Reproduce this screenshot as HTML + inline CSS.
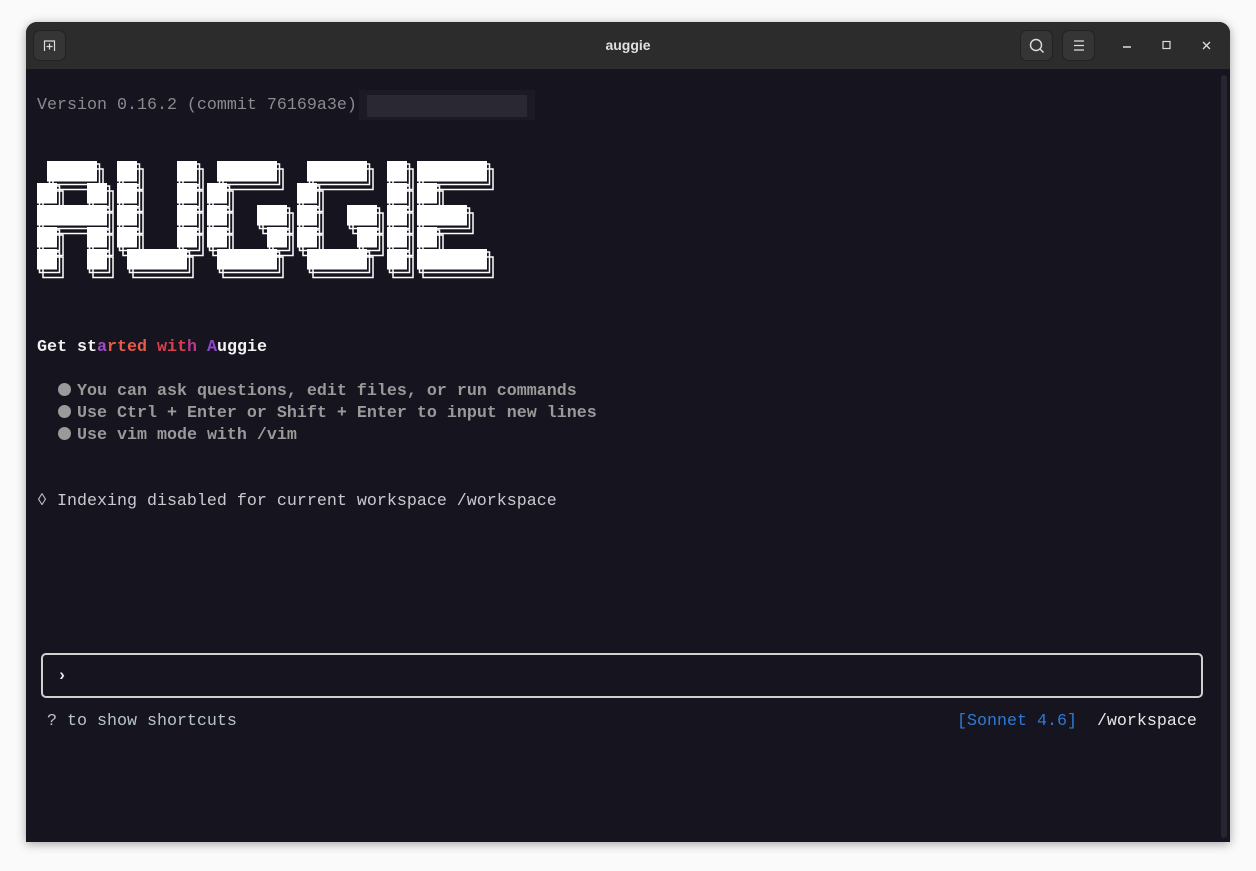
<!DOCTYPE html>
<html><head><meta charset="utf-8"><style>
body{margin:0;width:1256px;height:871px;background:#fafafa;position:relative;overflow:hidden;font-family:"Liberation Mono",monospace}
.win{position:absolute;left:26px;top:22px;width:1204px;height:820px;background:#16151f;border-radius:11px 11px 0 0;box-shadow:0 2px 10px rgba(0,0,0,.35);overflow:hidden}
.tb{position:absolute;left:0;top:0;width:1204px;height:47px;background:#2c2c2c}
.btn{position:absolute;top:8px;width:33px;height:31px;background:#353535;border:1px solid #222;border-radius:7px;box-sizing:border-box}
.title{position:absolute;left:0;width:1204px;top:15px;text-align:center;color:#e0e0e0;font:bold 14px "Liberation Sans",sans-serif}
.l{position:absolute;left:37px;height:22px;line-height:22px;font-size:16.67px;white-space:pre}
.dot{display:inline-block;width:13px;height:13px;border-radius:50%;background:#9a9a9a;vertical-align:-1px;margin-left:21px;margin-right:6px}
</style></head><body>
<div class="win">
<div class="tb">
<div class="btn" style="left:7px"><svg width="33" height="31" style="position:absolute;left:-1px;top:-1px"><path d="M11.5 21V11h10v10M16.5 13.5v6M13.5 16.5h6" stroke="#ddd" stroke-width="1.2" fill="none"/></svg></div>
<div class="title">auggie</div>
<div class="btn" style="left:994px"><svg width="33" height="31" style="position:absolute;left:-1px;top:-1px"><circle cx="16" cy="15" r="5.5" stroke="#ddd" stroke-width="1.4" fill="none"/><path d="M20 19l3.5 3.5" stroke="#ddd" stroke-width="1.4"/></svg></div>
<div class="btn" style="left:1036px"><svg width="33" height="31" style="position:absolute;left:-1px;top:-1px"><path d="M12 11h10M12 15.5h10M12 20h10" stroke="#ddd" stroke-width="1.2"/></svg></div>
<svg width="130" height="47" style="position:absolute;left:1080px;top:0"><path d="M17 25h8" stroke="#ddd" stroke-width="1.4"/><rect x="57" y="19.5" width="7" height="7" stroke="#ddd" stroke-width="1.2" fill="none"/><path d="M97 20l7 7M104 20l-7 7" stroke="#ddd" stroke-width="1.3"/></svg>
</div>
<div style="position:absolute;left:1195px;top:53px;width:6px;height:763px;background:#262530;border-radius:3px"></div>
</div>
<div style="position:absolute;left:359px;top:90px;width:176px;height:30px;background:#1c1b25"></div>
<div style="position:absolute;left:367px;top:95px;width:160px;height:22px;background:#2a2933"></div>
<div class="l" style="top:95px;color:#8a8a8f">Version 0.16.2 (commit 76169a3e)</div>
<svg width="520" height="140" style="position:absolute;left:0;top:150px" viewBox="0 150 520 140">
<defs><g id="b">
<rect x="47" y="161" width="50" height="20.5"/><rect x="117" y="161" width="20" height="20.5"/><rect x="177" y="161" width="20" height="20.5"/><rect x="217" y="161" width="60" height="20.5"/><rect x="307" y="161" width="60" height="20.5"/><rect x="387" y="161" width="20" height="20.5"/><rect x="417" y="161" width="70" height="20.5"/>
<rect x="37" y="183" width="20" height="20.5"/><rect x="87" y="183" width="20" height="20.5"/><rect x="117" y="183" width="20" height="20.5"/><rect x="177" y="183" width="20" height="20.5"/><rect x="207" y="183" width="20" height="20.5"/><rect x="297" y="183" width="20" height="20.5"/><rect x="387" y="183" width="20" height="20.5"/><rect x="417" y="183" width="20" height="20.5"/>
<rect x="37" y="205" width="70" height="20.5"/><rect x="117" y="205" width="20" height="20.5"/><rect x="177" y="205" width="20" height="20.5"/><rect x="207" y="205" width="20" height="20.5"/><rect x="257" y="205" width="30" height="20.5"/><rect x="297" y="205" width="20" height="20.5"/><rect x="347" y="205" width="30" height="20.5"/><rect x="387" y="205" width="20" height="20.5"/><rect x="417" y="205" width="50" height="20.5"/>
<rect x="37" y="227" width="20" height="20.5"/><rect x="87" y="227" width="20" height="20.5"/><rect x="117" y="227" width="20" height="20.5"/><rect x="177" y="227" width="20" height="20.5"/><rect x="207" y="227" width="20" height="20.5"/><rect x="267" y="227" width="20" height="20.5"/><rect x="297" y="227" width="20" height="20.5"/><rect x="357" y="227" width="20" height="20.5"/><rect x="387" y="227" width="20" height="20.5"/><rect x="417" y="227" width="20" height="20.5"/>
<rect x="37" y="249" width="20" height="20.5"/><rect x="87" y="249" width="20" height="20.5"/><rect x="127" y="249" width="60" height="20.5"/><rect x="217" y="249" width="60" height="20.5"/><rect x="307" y="249" width="60" height="20.5"/><rect x="387" y="249" width="20" height="20.5"/><rect x="417" y="249" width="70" height="20.5"/>
</g></defs>
<use href="#b" transform="translate(2.5,3)" fill="none" stroke="#fff" stroke-width="1.5"/>
<use href="#b" transform="translate(6,8)" fill="none" stroke="#fff" stroke-width="1.5"/>
<use href="#b" fill="#fff"/>
</svg>
<div class="l" style="top:337px;font-weight:bold;color:#f2f2f2">Get st<span style="color:#9b4ec4">a</span><span style="color:#ea5a48">rted</span> <span style="color:#dc3f4c">wit</span><span style="color:#b9388a">h</span> <span style="color:#8e45cc">A</span>uggie</div>
<div class="l" style="top:381px;font-weight:bold;color:#9a9a9a"><span class="dot"></span>You can ask questions, edit files, or run commands</div>
<div class="l" style="top:403px;font-weight:bold;color:#9a9a9a"><span class="dot"></span>Use Ctrl + Enter or Shift + Enter to input new lines</div>
<div class="l" style="top:425px;font-weight:bold;color:#9a9a9a"><span class="dot"></span>Use vim mode with /vim</div>
<div class="l" style="top:491px;color:#c9cbd0">◊ Indexing disabled for current workspace /workspace</div>
<div style="position:absolute;left:41px;top:653px;width:1162px;height:45px;border:2px solid #d0d0d0;border-radius:5px;box-sizing:border-box"></div>
<div class="l" style="top:666px;left:57px;color:#e8e8e8;font-weight:bold">›</div>
<div class="l" style="top:711px;left:47px;color:#b9c3cf">? to show shortcuts</div>
<div class="l" style="top:711px;left:957px;color:#2e7ad6">[Sonnet 4.6]  <span style="color:#e8e8e8">/workspace</span></div>
</body></html>
